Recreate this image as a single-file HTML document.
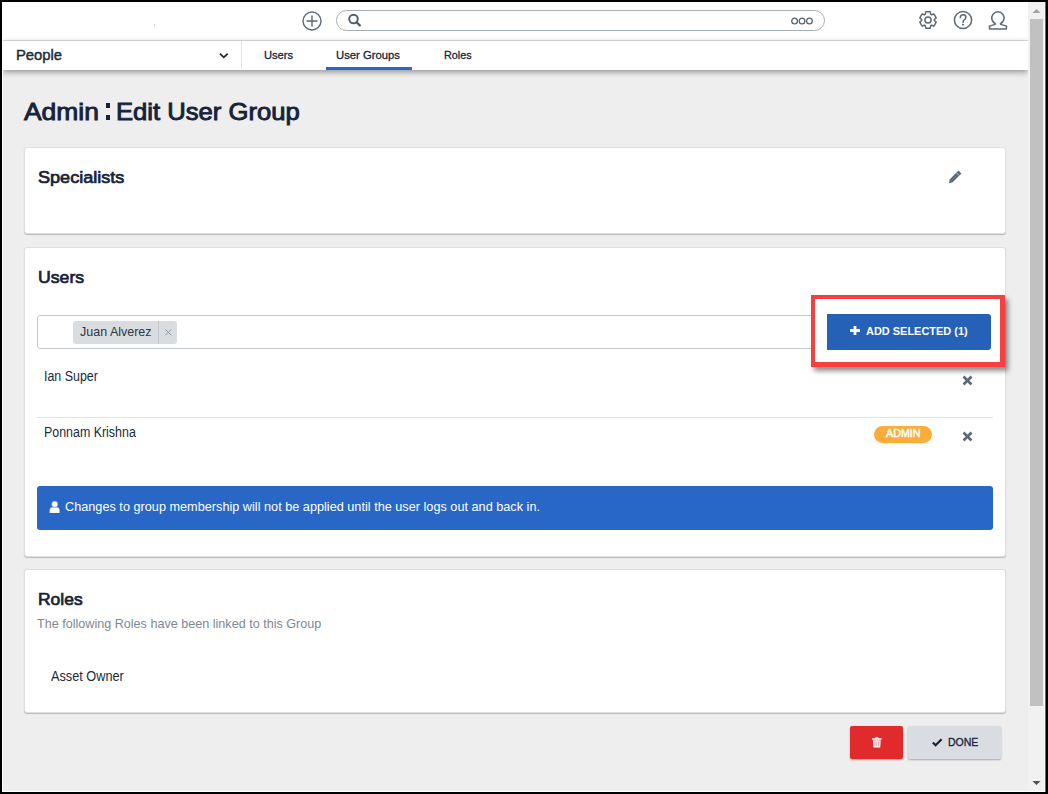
<!DOCTYPE html>
<html><head><meta charset="utf-8">
<style>
*{box-sizing:border-box;margin:0;padding:0}
html,body{width:1048px;height:794px;overflow:hidden;background:#000;font-family:"Liberation Sans",sans-serif;color:#1c2b3a}
.a{position:absolute}
.t{position:absolute;white-space:nowrap;line-height:1;transform-origin:0 0}
.card{position:absolute;left:24px;width:982px;background:#fff;border:1px solid #dcdfe2;border-radius:3px;box-shadow:0 1px 1px rgba(0,0,0,0.22)}
.hd{font-weight:bold;color:#15233a}
.hd2{color:#15233a;-webkit-text-stroke:0.7px #15233a}
</style></head><body>
<!-- window -->
<div class="a" style="left:2px;top:2px;width:1044px;height:790px;background:#eeeeee"></div>
<!-- header -->
<div class="a" style="left:3px;top:2px;width:1025px;height:38px;background:#fff"></div>
<div class="a" style="left:3px;top:40px;width:1025px;height:1px;background:#dde2e6"></div>
<div class="a" style="left:3px;top:41px;width:1025px;height:29px;background:#fff;box-shadow:0 2px 6px rgba(0,0,0,0.40)"></div>

<div class="a" style="left:154px;top:24px;width:1px;height:3px;background:#d2d2d2"></div>
<!-- header icons -->
<svg class="a" style="left:301px;top:9.5px" width="22" height="22" viewBox="0 0 22 22">
  <circle cx="11" cy="11" r="9" fill="none" stroke="#5d6a75" stroke-width="1.4"/>
  <path d="M11 5.5v11M5.5 11h11" stroke="#5d6a75" stroke-width="1.4"/>
</svg>
<div class="a" style="left:336px;top:10px;width:489px;height:21px;border:1px solid #a5adb4;border-radius:11px;background:#fff"></div>
<svg class="a" style="left:346px;top:12.4px" width="18" height="16" viewBox="0 0 18 16">
  <circle cx="7.5" cy="7" r="4.3" fill="none" stroke="#4f5c68" stroke-width="1.9"/>
  <path d="M10.6 10.2l3.2 3.2" stroke="#4f5c68" stroke-width="2.2" stroke-linecap="round"/>
</svg>
<svg class="a" style="left:790px;top:16.3px" width="25" height="10" viewBox="0 0 25 10">
  <circle cx="4.6" cy="5" r="2.85" fill="none" stroke="#5a6672" stroke-width="1.3"/>
  <circle cx="12" cy="5" r="2.85" fill="none" stroke="#5a6672" stroke-width="1.3"/>
  <circle cx="19.4" cy="5" r="2.85" fill="none" stroke="#5a6672" stroke-width="1.3"/>
</svg>
<!-- gear -->
<svg class="a" style="left:917.35px;top:9.25px" width="22" height="22" viewBox="0 0 22 22">
  <path d="M8.26 5.33 L8.75 2.86 L13.25 2.86 L13.74 5.33 L14.54 5.79 L16.93 4.98 L19.18 8.88 L17.28 10.54 L17.28 11.46 L19.18 13.12 L16.93 17.02 L14.54 16.21 L13.74 16.67 L13.25 19.14 L8.75 19.14 L8.26 16.67 L7.46 16.21 L5.07 17.02 L2.82 13.12 L4.72 11.46 L4.72 10.54 L2.82 8.88 L5.07 4.98 L7.46 5.79Z" fill="none" stroke="#5d6a75" stroke-width="1.5" stroke-linejoin="round"/>
  <circle cx="11" cy="11" r="3.1" fill="none" stroke="#5d6a75" stroke-width="1.5"/>
</svg>
<!-- help -->
<svg class="a" style="left:951.5px;top:9.4px" width="22" height="22" viewBox="0 0 22 22">
  <circle cx="11" cy="11" r="8.6" fill="none" stroke="#5d6a75" stroke-width="1.5"/>
  <path d="M8.3 8.7c0-1.7 1.2-2.9 2.8-2.9s2.8 1.1 2.8 2.6c0 1.4-0.9 2-1.8 2.6-0.7 0.5-1 1-1 1.8v0.6" fill="none" stroke="#5d6a75" stroke-width="1.5" stroke-linecap="round"/>
  <circle cx="11" cy="15.7" r="1" fill="#5d6a75"/>
</svg>
<!-- user -->
<svg class="a" style="left:986px;top:9px" width="24" height="23" viewBox="0 0 24 23">
  <path d="M9.4 14.62A6.15 6.15 0 1 1 14.4 14.62L14.6 15.4L20.6 17.1L20.3 19.9H3.6L3.3 17.1L9.2 15.4Z" fill="none" stroke="#5d6a75" stroke-width="1.5" stroke-linejoin="round"/>
</svg>

<!-- nav -->
<div class="t" style="left:16px;top:47px;font-size:15.1px;color:#1c2b3a;-webkit-text-stroke:0.45px #1c2b3a;transform:scaleX(0.98)">People</div>
<svg class="a" style="left:218px;top:51px" width="12" height="9" viewBox="0 0 12 9">
  <path d="M1.9 2.6L5.8 6.3 9.7 2.6" fill="none" stroke="#1c2b3a" stroke-width="1.8"/>
</svg>
<div class="a" style="left:241px;top:41px;width:1px;height:28px;background:#dde2e6"></div>
<div class="t" style="left:264px;top:49px;font-size:11.6px;color:#15243a;-webkit-text-stroke:0.3px #15243a;transform:scaleX(0.96)">Users</div>
<div class="t" style="left:336px;top:49px;font-size:11.6px;color:#15243a;-webkit-text-stroke:0.3px #15243a;transform:scaleX(0.974)">User Groups</div>
<div class="t" style="left:444px;top:49px;font-size:11.6px;color:#15243a;-webkit-text-stroke:0.3px #15243a;transform:scaleX(0.93)">Roles</div>
<div class="a" style="left:326px;top:67px;width:86px;height:3px;background:#2968c8"></div>

<!-- scrollbar -->
<div class="a" style="left:1028px;top:2px;width:17px;height:789px;background:#f1f1f1"></div>
<div class="a" style="left:1030px;top:19px;width:13px;height:687px;background:#c1c1c1"></div>
<svg class="a" style="left:1032px;top:8px" width="9" height="6" viewBox="0 0 9 6"><path d="M0.5 5L4.5 1 8.5 5z" fill="#a3a3a3"/></svg>
<svg class="a" style="left:1032px;top:780px" width="9" height="6" viewBox="0 0 9 6"><path d="M0.5 1L4.5 5 8.5 1z" fill="#505050"/></svg>

<!-- title -->
<div class="t" style="left:23.5px;top:100px;font-size:23.8px;color:#15233a;-webkit-text-stroke:0.9px #15233a;transform:scaleX(1.11)">Admin</div>
<div class="a" style="left:105.5px;top:103px;width:4.5px;height:4.7px;background:#15233a"></div>
<div class="a" style="left:105.5px;top:115px;width:4.5px;height:4.7px;background:#15233a"></div>
<div class="t" style="left:116px;top:100px;font-size:23.8px;color:#15233a;-webkit-text-stroke:0.9px #15233a;transform:scaleX(1.077)">Edit User Group</div>

<!-- card 1 -->
<div class="card" style="top:147px;height:87px"></div>
<div class="t hd2" style="left:37.5px;top:169.5px;font-size:16.8px;transform:scaleX(1.077)">Specialists</div>
<svg class="a" style="left:946px;top:168px" width="18" height="18" viewBox="0 0 18 18">
  <path d="M3 15.2L6.6 14.37 15.45 5.52 12.48 2.55 3.64 11.4Z" fill="#5a6673"/>
  <path d="M13.4 7.7L10.3 4.6" stroke="#fff" stroke-width="0.7" opacity="0.8"/>
  <path d="M4.6 13.3L12.6 5.3" stroke="#b9c6cf" stroke-width="0.5" opacity="0.6"/>
</svg>

<!-- card 2 -->
<div class="card" style="top:247px;height:310px"></div>
<div class="t hd2" style="left:38px;top:269.5px;font-size:16.8px;transform:scaleX(1.053)">Users</div>
<div class="a" style="left:37px;top:315px;width:800px;height:34px;border:1px solid #c4c9cd;border-radius:3px 0 0 3px;background:#fff"></div>
<div class="a" style="left:73px;top:321px;width:104px;height:23px;background:#dadde0;border-radius:3px"></div>
<div class="a" style="left:158px;top:321px;width:1px;height:23px;background:#c4c8cc"></div>
<div class="t" style="left:80px;top:325px;font-size:13.5px;color:#2b3744;transform:scaleX(0.926)">Juan Alverez</div>
<svg class="a" style="left:164px;top:328px" width="9" height="9" viewBox="0 0 9 9"><path d="M1.3 1.3l6 6M7.3 1.3l-6 6" stroke="#8f989f" stroke-width="1"/></svg>

<!-- red highlight -->
<div class="a" style="left:811px;top:295px;width:194px;height:72px;border:4px solid #f4403f;border-width:4px 5px 5px 4px;background:#fff;box-shadow:3px 4px 5px rgba(0,0,0,0.45)"></div>
<div class="a" style="left:827px;top:314px;width:164px;height:36px;background:#2661b8;border-radius:0 3px 3px 0"></div>
<svg class="a" style="left:850px;top:326px" width="10" height="9" viewBox="0 0 10 9"><path d="M3.6 0h2.8v3.1H10v2.8H6.4V9H3.6V5.9H0V3.1h3.6z" fill="#fff"/></svg>
<div class="t hd" style="left:865.5px;top:326px;font-size:11.4px;color:#fff;transform:scaleX(0.962)">ADD SELECTED (1)</div>

<div class="t" style="left:43.7px;top:370.3px;font-size:13.8px;transform:scaleX(0.9)">Ian Super</div>
<svg class="a" style="left:962px;top:375px" width="11" height="11" viewBox="0 0 11 11"><path d="M1.5 1.5l8 8M9.5 1.5l-8 8" stroke="#5d6a75" stroke-width="2.6"/></svg>
<div class="a" style="left:37px;top:417px;width:956px;height:1px;background:#e3e6e8"></div>
<div class="t" style="left:43.7px;top:426.4px;font-size:13.8px;transform:scaleX(0.9)">Ponnam Krishna</div>
<div class="a" style="left:874px;top:426px;width:58px;height:17px;background:#fbad3c;border-radius:9px"></div>
<div class="t" style="left:885.5px;top:428.2px;font-size:10.5px;color:#fff;-webkit-text-stroke:0.45px #fff;transform:scaleX(1.02)">ADMIN</div>
<svg class="a" style="left:962px;top:431px" width="11" height="11" viewBox="0 0 11 11"><path d="M1.5 1.5l8 8M9.5 1.5l-8 8" stroke="#5d6a75" stroke-width="2.6"/></svg>

<div class="a" style="left:37px;top:486px;width:956px;height:44px;background:#2867c6;border-radius:3px"></div>
<svg class="a" style="left:49px;top:501px" width="12" height="13" viewBox="0 0 12 13"><path d="M0.7 12V9.4Q0.7 6.3 3.8 6.3H7.4Q10.5 6.3 10.5 9.4V12Z" fill="#fff"/><circle cx="5.75" cy="3.2" r="3.2" fill="#fff" stroke="#2867c6" stroke-width="0.5"/></svg>
<div class="t" style="left:65px;top:500.2px;font-size:13.6px;color:#fff;transform:scaleX(0.934)">Changes to group membership will not be applied until the user logs out and back in.</div>

<!-- card 3 -->
<div class="card" style="top:569px;height:144px"></div>
<div class="t hd2" style="left:38px;top:591.5px;font-size:16.8px;transform:scaleX(1.04)">Roles</div>
<div class="t" style="left:37px;top:617px;font-size:13.5px;color:#7d8891;transform:scaleX(0.933)">The following Roles have been linked to this Group</div>
<div class="t" style="left:51px;top:669.5px;font-size:13.9px;transform:scaleX(0.916)">Asset Owner</div>

<!-- buttons -->
<div class="a" style="left:850px;top:726px;width:53px;height:33px;background:#e12a2c;border-radius:2px;box-shadow:0 1px 2px rgba(0,0,0,0.3)"></div>
<svg class="a" style="left:872px;top:736.8px" width="10" height="11" viewBox="0 0 10 11"><path d="M3.4 0.2h2.8l0.4 1H9.6v1.5H0V1.2h3z" fill="#fff"/><path d="M0.9 3.3h7.8l-0.5 7.2H1.4z" fill="#fff"/><path d="M3.1 4.5v4.8M4.8 4.5v4.8M6.5 4.5v4.8" stroke="#eb8d8e" stroke-width="0.8"/></svg>
<div class="a" style="left:908px;top:726px;width:93px;height:33px;background:#d9dde1;border-radius:2px;box-shadow:0 1px 2px rgba(0,0,0,0.3)"></div>
<svg class="a" style="left:931.5px;top:738.3px" width="11" height="9" viewBox="0 0 11 9"><path d="M0.9 4.5l2.7 2.7 6-6" fill="none" stroke="#15233a" stroke-width="2.3"/></svg>
<div class="t" style="left:948px;top:736.6px;font-size:11.2px;color:#15233a;-webkit-text-stroke:0.3px #15233a;transform:scaleX(0.94)">DONE</div>

<!-- frame lines -->
<div class="a" style="left:2px;top:2px;width:1px;height:790px;background:#fff"></div>
<div class="a" style="left:2px;top:791px;width:1044px;height:1px;background:#fff"></div>
<div class="a" style="left:1044px;top:2px;width:1px;height:790px;background:#f8f8f8"></div>
<div class="a" style="left:1045px;top:2px;width:1px;height:790px;background:#4a7090"></div>
</body></html>
